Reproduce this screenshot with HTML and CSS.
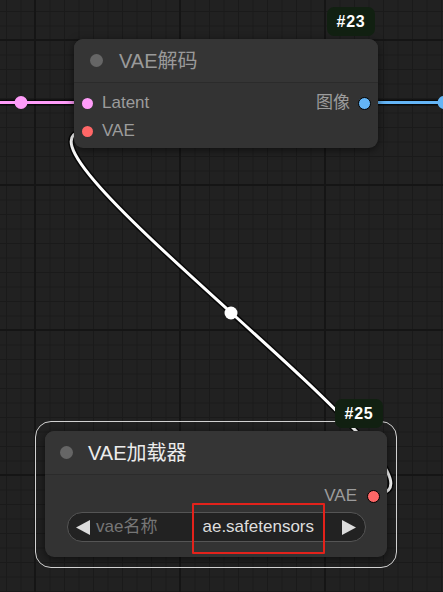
FILE: index.html
```html
<!DOCTYPE html>
<html lang="zh">
<head>
<meta charset="utf-8">
<title>VAE nodes</title>
<link rel="stylesheet" href="styles.css">
</head>
<body>
<div class="canvas">
  <svg class="links" width="443" height="592" viewBox="0 0 443 592">
    <g fill="none" stroke-linecap="round">
      <path class="link-border" d="M-60 102.5 L88 102.5"/>
      <path class="link latent" d="M-60 102.5 L88 102.5"/>
      <path class="link-border" d="M365 102.5 L520 102.5"/>
      <path class="link image" d="M365 102.5 L520 102.5"/>
      <path class="link-border" d="M374 494 C489 494 -27 131 88 131"/>
      <path class="link vae" d="M374 494 C489 494 -27 131 88 131"/>
    </g>
    <circle class="mid latent-fill" cx="21" cy="102.5" r="6.5"/>
    <circle class="mid image-fill" cx="444" cy="102.5" r="6.5"/>
    <circle class="mid vae-fill" cx="231" cy="313" r="6.5"/>
  </svg>

  <div class="node node-decode">
    <div class="badge">#23</div>
    <div class="node-title">
      <span class="title-dot"></span>
      <span class="title-text">VAE解码</span>
    </div>
    <div class="node-body">
      <div class="slot-row">
        <div class="slot slot-in"><span class="dot dot-latent"></span><span class="slot-label">Latent</span></div>
        <div class="slot slot-out"><span class="slot-label">图像</span><span class="dot dot-image linked"></span></div>
      </div>
      <div class="slot-row">
        <div class="slot slot-in"><span class="dot dot-vae"></span><span class="slot-label">VAE</span></div>
      </div>
    </div>
  </div>

  <div class="node node-loader selected">
    <div class="badge">#25</div>
    <div class="node-title">
      <span class="title-dot"></span>
      <span class="title-text">VAE加载器</span>
    </div>
    <div class="node-body">
      <div class="slot-row slot-row-end">
        <div class="slot slot-out"><span class="slot-label">VAE</span><span class="dot dot-vae linked"></span></div>
      </div>
      <div class="combo">
        <svg class="arrow" width="14" height="15" viewBox="0 0 14 15"><polygon points="14,0 14,15 0,7.5"/></svg>
        <span class="combo-label">vae名称</span>
        <span class="combo-value">ae.safetensors</span>
        <svg class="arrow" width="14" height="15" viewBox="0 0 14 15"><polygon points="0,0 0,15 14,7.5"/></svg>
      </div>
    </div>
  </div>

  <div class="annotation"></div>
</div>
</body>
</html>
```
FILE: styles.css
```css
html, body {
  margin: 0;
  padding: 0;
  background: #202020;
}

.canvas {
  position: relative;
  width: 443px;
  height: 592px;
  overflow: hidden;
  font-family: "Liberation Sans", Arial, "Noto Sans CJK SC", sans-serif;
  background-color: #212121;
  background-image:
    linear-gradient(to right, #151515 2px, transparent 2px),
    linear-gradient(to bottom, #151515 2px, transparent 2px),
    linear-gradient(to right, #1a1a1a 1px, transparent 1px),
    linear-gradient(to bottom, #1a1a1a 1px, transparent 1px);
  background-size: 145px 145px, 145px 145px, 14.5px 14.5px, 14.5px 14.5px;
  background-position: 179px 184px, 179px 184px, 6px 11px, 6px 11px;
}

.links {
  position: absolute;
  left: 0;
  top: 0;
}

.link-border {
  stroke: #000;
  stroke-width: 6;
  stroke-opacity: 0.75;
}

.link {
  stroke-width: 3;
}

.link.latent { stroke: #ff9cf9; }
.link.image { stroke: #64b5f6; }
.link.vae { stroke: #ffffff; }

.latent-fill { fill: #ff9cf9; }
.image-fill { fill: #64b5f6; }
.vae-fill { fill: #ffffff; }

.node {
  position: absolute;
  display: flex;
  flex-direction: column;
  background: #333333;
  border-radius: 9px;
  box-shadow: 0 2px 8px rgba(0, 0, 0, 0.55);
}

.node-decode {
  left: 74px;
  top: 39px;
  width: 304px;
  height: 109px;
}

.node-loader {
  left: 45px;
  top: 431px;
  width: 342px;
  height: 126px;
}

.node-loader.selected::before {
  content: "";
  position: absolute;
  left: -10px;
  top: -10px;
  right: -10px;
  bottom: -11px;
  border: 1.5px solid #d2d2d2;
  border-radius: 16px;
  pointer-events: none;
}

.badge {
  position: absolute;
  right: 3px;
  top: -32px;
  width: 48px;
  height: 29px;
  display: flex;
  align-items: center;
  justify-content: center;
  background: #112011;
  border-radius: 7px;
  color: #ffffff;
  font-size: 16px;
  font-weight: bold;
  letter-spacing: 0.8px;
}

.node-loader .badge {
  right: 4px;
}

.node-title {
  height: 44px;
  display: flex;
  align-items: center;
  padding-left: 16px;
  background: #353535;
  border-radius: 9px 9px 0 0;
  border-bottom: 1px solid #2b2b2b;
  box-sizing: border-box;
}

.title-dot {
  width: 13px;
  height: 13px;
  border-radius: 50%;
  background: #666666;
  flex: none;
}

.title-text {
  margin-left: 16px;
  font-size: 20px;
  line-height: 24px;
  color: #9a9a9a;
}

.node-loader .node-title {
  padding-left: 15px;
}

.node-loader .title-text {
  margin-left: 15px;
  color: #ececec;
}

.node-body {
  display: flex;
  flex-direction: column;
  padding-top: 6px;
}

.node-loader .node-body {
  padding-top: 7px;
}

.slot-row {
  height: 28px;
  display: flex;
  align-items: center;
  justify-content: space-between;
}

.slot-row-end {
  justify-content: flex-end;
}

.slot {
  display: flex;
  align-items: center;
}

.slot-in {
  padding-left: 8px;
}

.slot-out {
  padding-right: 7px;
}

.slot-label {
  font-size: 17px;
  line-height: 20px;
  color: #9c9c9c;
}

.slot-in .slot-label {
  margin-left: 9px;
}

.slot-out .slot-label {
  margin-right: 8px;
}

.node-loader .slot-out {
  padding-right: 7px;
}

.node-loader .slot-out .slot-label {
  margin-right: 10px;
}

.dot {
  width: 11px;
  height: 11px;
  border-radius: 50%;
  flex: none;
  box-sizing: border-box;
}

.dot.linked {
  width: 13px;
  height: 13px;
  border: 1.5px solid #000;
}

.dot-latent { background: #ff9cf9; }
.dot-image { background: #64b5f6; }
.dot-vae { background: #ff6767; }

.combo {
  margin: 2px 21px 0 22px;
  height: 30px;
  box-sizing: border-box;
  border: 1px solid #555555;
  border-radius: 15px;
  background: #222222;
  display: flex;
  align-items: center;
  padding: 0 9px 0 8px;
  font-size: 17px;
  line-height: 20px;
}

.arrow {
  flex: none;
  fill: #dcdcdc;
}

.combo-label {
  margin-left: 6px;
  color: #767676;
  flex: 1;
}

.combo-value {
  color: #dedede;
  margin-right: 28px;
}

.annotation {
  position: absolute;
  left: 192px;
  top: 503px;
  width: 133px;
  height: 51px;
  box-sizing: border-box;
  border: 2px solid #e3221b;
  border-radius: 1px;
}
```
